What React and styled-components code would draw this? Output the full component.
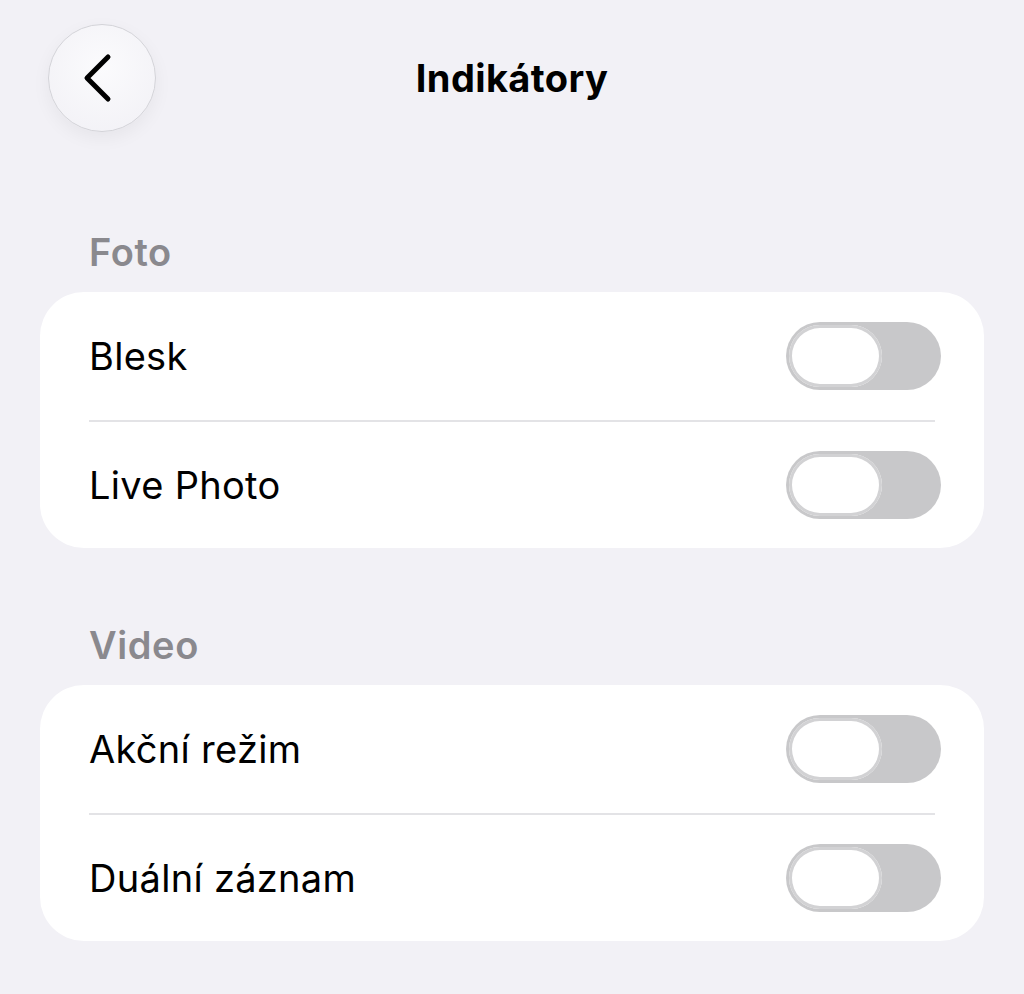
import React from "react";
import styled, { createGlobalStyle } from "styled-components";

const GlobalStyle = createGlobalStyle`
  html, body {
    margin: 0;
    padding: 0;
    background: #f2f1f6;
  }
  body {
    font-family: Inter, "Liberation Sans", sans-serif;
    -webkit-font-smoothing: antialiased;
  }
`;

const sections = [
  { title: "Foto", items: ["Blesk", "Live Photo"] },
  { title: "Video", items: ["Akční režim", "Duální záznam"] },
];

const Page = styled.div`
  width: 1024px;
  height: 994px;
  padding: 24px 40px 0 40px;
  box-sizing: border-box;
  background: #f2f1f6;
`;

const Header = styled.div`
  position: relative;
  height: 108px;
  display: flex;
  align-items: center;
  justify-content: center;
`;

const BackButton = styled.button`
  position: absolute;
  left: 8px;
  top: 0;
  width: 108px;
  height: 108px;
  border-radius: 50%;
  border: 1.5px solid #d3d3d8;
  background: radial-gradient(circle at 50% 40%, #fbfbfd 0%, #f1f0f5 100%);
  box-shadow: 0 6px 18px rgba(0, 0, 0, 0.05);
  display: flex;
  align-items: center;
  justify-content: center;
  padding: 0;
`;

const Title = styled.h1`
  margin: 0;
  font-size: 38px;
  font-weight: 700;
  color: #000;
  letter-spacing: 0.4px;
`;

const Section = styled.section`
  margin-top: ${(p) => (p.first ? "102px" : "79px")};
`;

const SectionTitle = styled.h2`
  margin: 0 0 22px 49px;
  font-size: 38px;
  font-weight: 600;
  color: #8a898e;
  line-height: 36px;
  letter-spacing: 0.6px;
`;

const Card = styled.div`
  background: #fff;
  border-radius: 44px;
  padding: 0 49px;
`;

const Row = styled.div`
  height: 128px;
  display: flex;
  align-items: center;
  justify-content: space-between;
  border-top: ${(p) => (p.divider ? "2px solid #e3e3e6" : "none")};
  box-sizing: border-box;
`;

const Label = styled.span`
  font-size: 38px;
  color: #000;
  letter-spacing: 0.3px;
`;

const Toggle = styled.div`
  width: 155px;
  height: 68px;
  margin-right: -6px;
  border-radius: 34px;
  background: #c8c8ca;
  position: relative;
  flex-shrink: 0;
`;

const Knob = styled.div`
  position: absolute;
  left: 3px;
  top: 3px;
  width: 93px;
  height: 62px;
  border-radius: 31px;
  background: #fff;
  box-shadow: inset 0 0 0 3px #d2d2d4;
`;

const Chevron = () => (
  <svg width="40" height="52" viewBox="0 0 40 52">
    <path
      d="M26 5 L5 26 L26 47"
      fill="none"
      stroke="#000"
      strokeWidth="5"
      strokeLinecap="round"
      strokeLinejoin="round"
    />
  </svg>
);

export default function App() {
  return (
    <>
      <GlobalStyle />
      <Page>
        <Header>
          <BackButton aria-label="Zpět">
            <Chevron />
          </BackButton>
          <Title>Indikátory</Title>
        </Header>
        {sections.map((s, i) => (
          <Section key={s.title} first={i === 0}>
            <SectionTitle>{s.title}</SectionTitle>
            <Card>
              {s.items.map((item, j) => (
                <Row key={item} divider={j > 0}>
                  <Label>{item}</Label>
                  <Toggle>
                    <Knob />
                  </Toggle>
                </Row>
              ))}
            </Card>
          </Section>
        ))}
      </Page>
    </>
  );
}
